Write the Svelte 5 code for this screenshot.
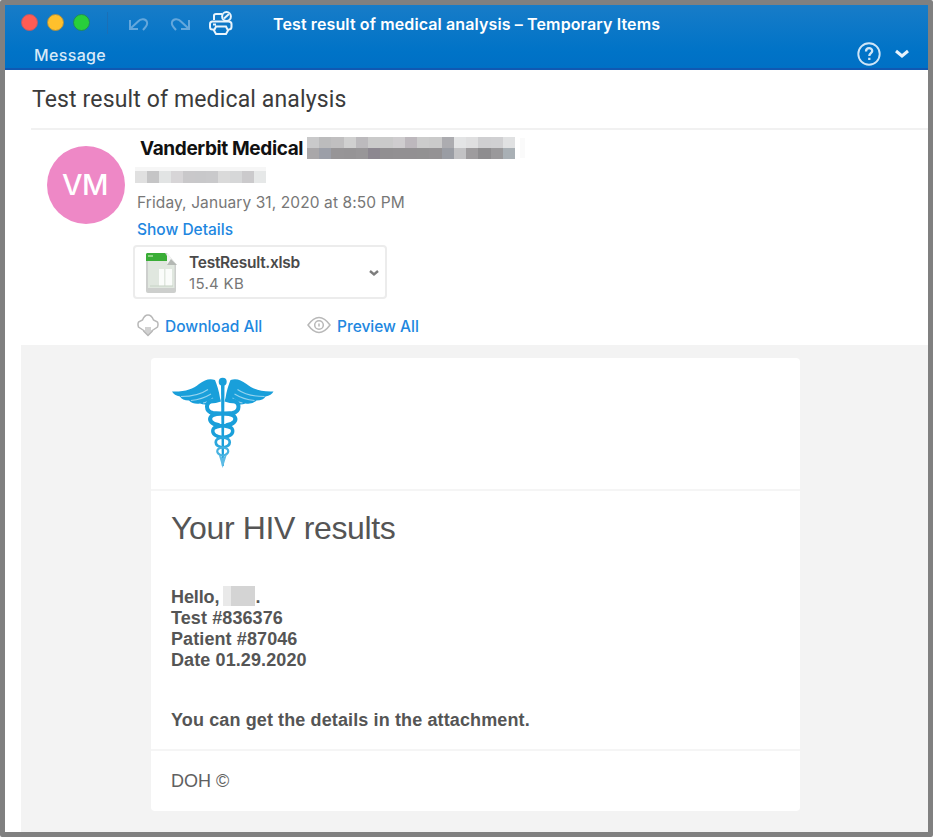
<script>
  const senderTop = ['#c9c9ca', '#bcbcbd', '#c0bfc0', '#d0d0d0', '#bcbabd', '#cacaca', '#cacaca', '#cfcdcf', '#bdb8bd', '#cccccc', '#cacaca', '#acacb0', '#e3e4e5', '#dfdfe0', '#cfcfd1', '#d0d0d2', '#e0e1e2'];
  const senderBottom = ['#a9a7a9', '#9c9fa8', '#979597', '#969496', '#989698', '#8c8790', '#918f91', '#929092', '#929092', '#929192', '#949294', '#9a9da4', '#c2c2c4', '#9e9c9e', '#8e8d8f', '#9a999b', '#a9b0b5'];
  const address = ['#e0e0e0', '#c5c5c6', '#e2e4e4', '#d7d5d7', '#c9c8ca', '#c8c8ca', '#c9c9cb', '#dadada', '#d6d7d8', '#cbcacc', '#e6e8e8'];
  const details = ['Test #836376', 'Patient #87046', 'Date 01.29.2020'];
</script>

<div class="window">
  <header class="titlebar">
    <div class="toprow">
      <div class="lights"><i class="red"></i><i class="yellow"></i><i class="green"></i></div>
      <span class="sep"></span>
      <svg class="undo" width="22" height="18" viewBox="0 0 22 18" fill="none" stroke="#64a7dc" stroke-width="2">
        <path d="M2 5v9h8M2.500 13.500 10 6.500c3-3.500 8-2.500 9 .5 1 3.500-1.500 5-4 8" />
      </svg>
      <svg class="redo" width="22" height="18" viewBox="0 0 22 18" fill="none" stroke="#64a7dc" stroke-width="2">
        <path d="M20 5v9h-8M19.500 13.500 12 6.500c-3-3.500-8-2.500-9 .5-1 3.500 1.500 5 4 8" />
      </svg>
      <svg class="printer" width="26" height="26" viewBox="0 0 26 26" fill="none" stroke="#e9f4fc" stroke-width="2">
        <path d="M6 10V5.500Q6 4 8 4h6M4.500 11.500h16q3 0 3 2.500v3q0 2.500-3 2.500M6 19.500H4.500q-2.500 0-2.500-2.500v-3q0-2.500 2.500-2.500M8 16.500h10l2 4-2 3.500H8l-2-3.500zM5 14.500h3" />
        <circle cx="18.500" cy="6.500" r="4.400" /><path d="m16 8.500 5-4.500" />
      </svg>
      <span class="title">Test result of medical analysis – Temporary Items</span>
    </div>
    <div class="tabrow">
      <span class="tab">Message</span>
      <div class="tools">
        <svg width="26" height="26" viewBox="0 0 26 26" fill="none" stroke="#cfe5f7" stroke-width="1.900">
          <circle cx="13" cy="13" r="10.700" /><path d="M10 10.500c0-4.600 6.200-4.300 6.200-.6 0 2.200-2.900 2.200-2.900 5.100M13.300 16.800v2.200" stroke-width="2.300" />
        </svg>
        <svg width="16" height="12" viewBox="0 0 16 12" fill="none" stroke="#e6f2fc" stroke-width="3"><path d="m2 3 6 5 6-5" /></svg>
      </div>
    </div>
  </header>

  <div class="subject"><span>Test result of medical analysis</span></div>

  <section class="meta">
    <div class="avatar"><span>VM</span></div>
    <div class="info">
      <div class="from">
        <strong>Vanderbit Medical</strong>
        <div class="mosaic">
          <div class="cells">{#each senderTop as c}<b style:background={c}></b>{/each}</div>
          <div class="cells">{#each senderBottom as c}<b style:background={c}></b>{/each}</div>
        </div>
        <span class="trace"></span>
      </div>
      <div class="address">{#each address as c}<b style:background={c}></b>{/each}</div>
      <div class="date"><span>Friday, January 31, 2020 at 8:50 PM</span></div>
      <div class="show"><span>Show Details</span></div>
      <div class="attachment">
        <svg class="sheet" width="32" height="42" viewBox="0 0 32 42">
          <path d="M2 1h19l9 11v27q0 2-2 2H2q-2 0-2-2V3q0-2 2-2z" fill="#cdcfcd" />
          <path d="M2 3h18l8.500 10v23H2z" fill="#e0e7df" />
          <path d="M13 17h5v17h-5zM19.500 17H26v17h-6.500z" fill="#fafcfa" />
          <path d="M4 34h23" stroke="#c6d3c5" fill="none" />
          <path d="M1 1h18l2 3v5H0V2z" fill="#39ad36" /><path d="M2 3h5v2H2z" fill="#8ed184" />
          <path d="M21 1v9q0 3 3 3h7z" fill="#f3f4f3" /><path d="M21 13h10l-6-6z" fill="#b4b8b4" />
        </svg>
        <div class="file">
          <div class="name"><span>TestResult.xlsb</span></div>
          <div class="size"><span>15.4 KB</span></div>
        </div>
        <svg class="arrow" width="10" height="8" viewBox="0 0 10 8" fill="none" stroke="#7d7d7d" stroke-width="2.400"><path d="m1 2 4 3.500L9 2" /></svg>
      </div>
      <div class="actions">
        <svg class="cloud" width="22" height="24" viewBox="0 0 22 24" fill="none" stroke="#b8b8b8" stroke-width="1.500">
          <path d="M7.500 18 1.500 14q-1-3 0-5l4-2q2-5 5.500-5t5.500 5l4 2q1 2 0 5l-6 4" /><path d="M8 14h6v4h2l-5 5-5-5h2z" fill="#d2d2d2" stroke="none" /><path d="m6.500 18 4.500 4.500 4.500-4.500" />
        </svg>
        <span class="download">Download All</span>
        <svg class="eye" width="24" height="18" viewBox="0 0 24 18" fill="none" stroke="#b8b8b8" stroke-width="1.500">
          <path d="M1 9q11-15 22 0-11 15-22 0z" /><circle cx="12" cy="9" r="4.300" /><path d="M12 7.500v3" />
        </svg>
        <span class="preview">Preview All</span>
      </div>
    </div>
  </section>

  <main>
    <article>
      <div class="logo">
        <svg width="104" height="92" viewBox="0 0 104 92">
          <defs>
            <g id="wing">
              <path d="M49 21C48 14 46 8 44 3 38 1 34 3 28 7 22 12 14 15 1 14.500q2 4 8 5 2 4 9 4 4 4 11 3 5 2 10 0 6 0 11-2z" fill="#199fda" />
              <path d="M10 19.500q17 0 27-7M20 23.500q11-1 20-6.500M32 26q6-1 10-5" fill="none" stroke="#94d3ef" stroke-width="1.100" />
            </g>
          </defs>
          <use href="#wing" /><use href="#wing" transform="translate(103.500 0) scale(-1 1)" />
          <circle cx="51.700" cy="4.800" r="4" fill="#199fda" />
          <path d="M50 8h3.500l-.7 81h-2z" fill="#199fda" />
          <g fill="none" stroke="#199fda" stroke-linecap="round">
            <path stroke-width="4" d="M42 23.500c-8 1.500-8 11 0 12.500 7 1 17-.5 21 3 3.500 4 0 8-7 9M61.500 23.500c8 1.500 8 11 0 12.500-7 1-17-.5-21 3-3.500 4 0 8 7 9" />
            <path stroke-width="3.400" d="M46 48.500c6 .5 14 0 15.500 4 1.500 5-4 7.500-9.500 8M57.500 48.500c-6 .5-14 0-15.500 4-1.500 5 4 7.500 9.500 8" />
            <path stroke-width="2.700" stroke="#2ba7dd" d="M52 60.500c9 1 9 8 0 10M51.500 60.500c-9 1-9 8 0 10" />
            <path stroke-width="2.200" stroke="#45b2e1" d="M52 70.500c7 1 7 6 0 8M51.500 70.500c-7 1-7 6 0 8" />
          </g>
          <path d="M47.500 77l4.200 14L56 77l-4.300 4z" fill="#5cbbe5" />
        </svg>
      </div>
      <div class="content">
        <h1><span>Your HIV results</span></h1>
        <div class="hello"><span>Hello,</span><i class="patch"><b></b></i><span>.</span></div>
        {#each details as line}<div class="line"><span>{line}</span></div>{/each}
        <p><span>You can get the details in the attachment.</span></p>
      </div>
      <footer><span>DOH ©</span></footer>
    </article>
  </main>
</div>

<style>
  :global(body) { margin: 0; background: #fff; }
  .window { box-sizing: border-box; width: 933px; height: 837px; border: 5px solid #808080; border-radius: 2px; background: #fff; overflow: hidden; font-family: Inter, 'Liberation Sans', sans-serif; white-space: nowrap; }
  svg { display: block; flex: none; }
  .titlebar { box-sizing: border-box; height: 65px; background: linear-gradient(#177cc8, #0073c7 75%, #0070c5); border-bottom: 2px solid #1058b2; color: #fff; }
  .toprow { display: flex; align-items: center; height: 36px; padding-left: 16px; }
  .lights { display: flex; gap: 10px; margin-top: -2px; }
  .lights i { box-sizing: border-box; width: 17px; height: 17px; border-radius: 50%; margin-right: -1px; }
  .red { background: #ff5c54; border: 1px solid #b65b6b; }
  .yellow { background: #ffc02c; border: 1px solid #a58e49; }
  .green { background: #28cf3b; border: 1px solid #218660; }
  .sep { width: 1px; height: 22px; margin: 0 20px 0 18px; background: #1b6fb6; }
  .undo, .redo { margin-top: 2px; }
  .redo { margin-left: 19px; }
  .printer { margin: -1px 0 0 17px; }
  .title { margin: 2px 0 0 39px; font-size: 16px; font-weight: 600; letter-spacing: 0.12px; }
  .tabrow { display: flex; justify-content: space-between; align-items: center; height: 26px; padding: 0 18px 0 29px; }
  .tab { margin-top: 2px; font-size: 16px; font-weight: 500; letter-spacing: 0.35px; color: #d7e9f8; }
  .tools { display: flex; align-items: center; gap: 12px; margin-top: -1px; }
  .subject { box-sizing: border-box; height: 60px; margin-left: 26px; padding-left: 1px; border-bottom: 2px solid #f1f1f1; font: 23px/60px Roboto, sans-serif; letter-spacing: 0.14px; color: #3b3b3b; }
  .meta { display: flex; height: 215px; }
  .avatar { display: flex; align-items: center; justify-content: center; width: 78px; height: 78px; margin: 16px 0 0 42px; border-radius: 50%; background: #ee88c6; color: #fff; font-size: 29px; font-weight: 500; letter-spacing: -0.5px; flex: none; }
  .avatar span { margin: -2px 2px 0 0; }
  .info { margin-left: 4px; }
  .from { display: flex; height: 36px; align-items: center; padding-left: 11px; }
  .from strong { font-size: 19px; letter-spacing: -0.38px; color: #111; width: 167px; margin-top: 1px; }
  .mosaic { width: 208px; }
  .cells { display: flex; height: 11px; }
  .cells b { flex: 1; }
  .trace { width: 5px; height: 20px; margin-left: 5px; background: #fafafa; }
  .address { display: flex; width: 131px; height: 12px; margin: 1px 0 0 6px; border-top: 4px solid #f6f6f6; }
  .address b { flex: 1; }
  .date { height: 31px; margin: 4px 0 0 8px; font-size: 15.500px; line-height: 31px; letter-spacing: 0.1px; color: #777; }
  .show { height: 23px; margin-left: 8px; font-size: 15.500px; line-height: 23px; font-weight: 500; color: #2186df; }
  .attachment { box-sizing: border-box; display: flex; width: 254px; height: 54px; margin: 4px 0 0 4px; padding: 5px 6px 0 11px; border: 2px solid #ececec; border-radius: 4px; }
  .file { flex: 1; margin-left: 11px; }
  .name { font-size: 15.500px; line-height: 22px; font-weight: 600; letter-spacing: -0.27px; color: #4a4a4a; }
  .size { font-size: 15px; line-height: 20px; letter-spacing: 0.3px; color: #777; }
  .arrow { margin-top: 17px; }
  .actions { display: flex; align-items: center; height: 24px; margin: 14px 0 0 8px; font-size: 15.500px; font-weight: 500; color: #2187df; }
  .download { width: 97px; margin: 2px 0 0 6px; }
  .eye { margin-left: 45px; }
  .preview { margin: 2px 0 0 6px; }
  main { box-sizing: border-box; height: 487px; margin-left: 16px; padding: 13px 0 0 130px; background: #f3f3f3; }
  article { box-sizing: border-box; width: 649px; height: 453px; border-radius: 4px; background: #fff; color: #555; font-family: 'Liberation Sans', sans-serif; }
  .logo { box-sizing: border-box; height: 133px; padding: 19px 0 0 20px; border-bottom: 2px solid #f5f5f5; }
  .content { box-sizing: border-box; height: 260px; padding: 17px 0 0 20px; border-bottom: 2px solid #f5f5f5; font-size: 18px; font-weight: 700; }
  h1 { margin: 0; height: 78px; font-size: 32px; line-height: 40px; font-weight: 400; color: #555; letter-spacing: -0.35px; }
  .hello { display: flex; height: 22px; line-height: 22px; letter-spacing: -0.1px; }
  .patch { display: flex; width: 32px; height: 20px; margin-left: 4px; background: #e9e9e9; justify-content: flex-end; }
  .patch b { width: 24px; background: #d4d4d4; }
  .line { height: 21px; line-height: 20px; letter-spacing: 0.1px; }
  p { margin: 39px 0 0; line-height: 20px; letter-spacing: 0.12px; }
  footer { padding-left: 20px; font-size: 18px; line-height: 61px; color: #606060; }
</style>
